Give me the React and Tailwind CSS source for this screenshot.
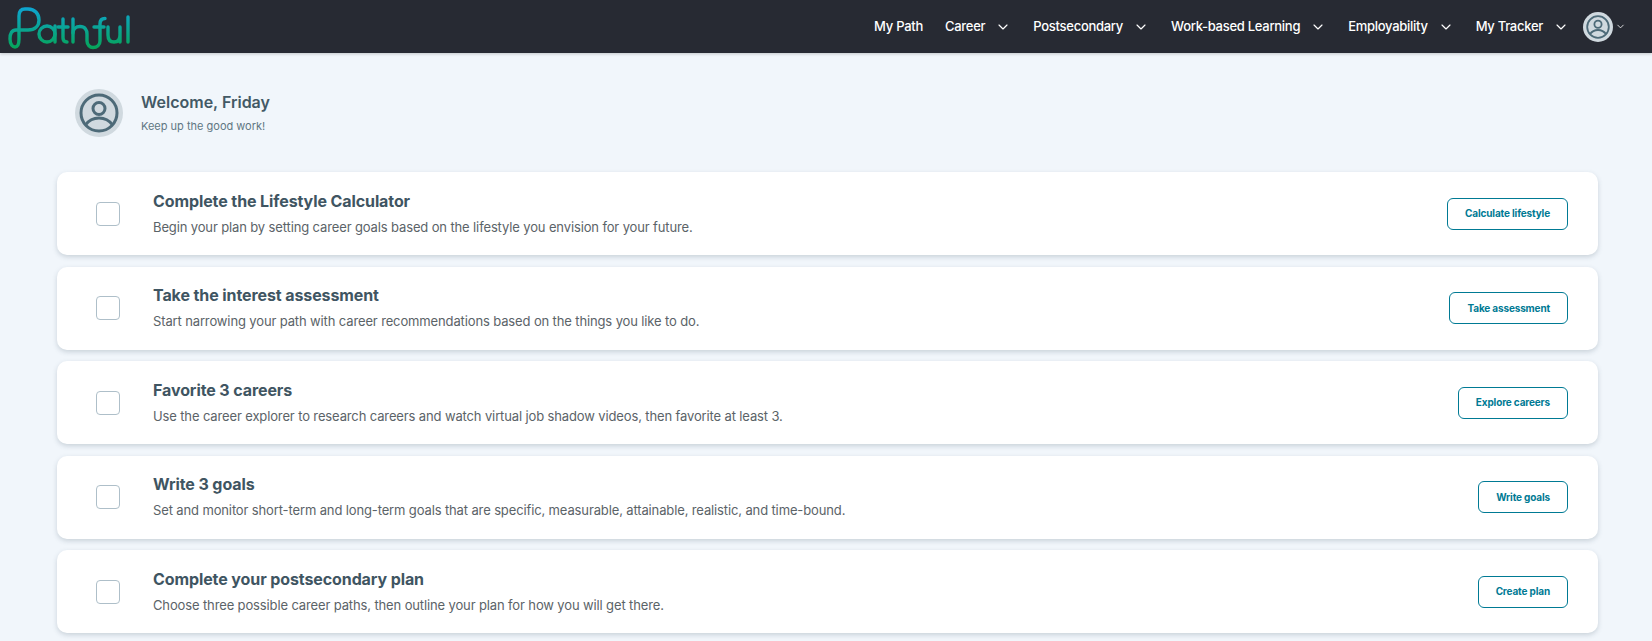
import { ChevronDown } from 'lucide-react';

const navItems = [
	{ label: 'My Path' },
	{ label: 'Career', menu: true },
	{ label: 'Postsecondary', menu: true },
	{ label: 'Work-based Learning', menu: true },
	{ label: 'Employability', menu: true },
	{ label: 'My Tracker', menu: true },
];

const tasks = [
	{
		title: 'Complete the Lifestyle Calculator',
		text: 'Begin your plan by setting career goals based on the lifestyle you envision for your future.',
		action: 'Calculate lifestyle',
	},
	{
		title: 'Take the interest assessment',
		text: 'Start narrowing your path with career recommendations based on the things you like to do.',
		action: 'Take assessment',
	},
	{
		title: 'Favorite 3 careers',
		text: 'Use the career explorer to research careers and watch virtual job shadow videos, then favorite at least 3.',
		action: 'Explore careers',
	},
	{
		title: 'Write 3 goals',
		text: 'Set and monitor short-term and long-term goals that are specific, measurable, attainable, realistic, and time-bound.',
		action: 'Write goals',
	},
	{
		title: 'Complete your postsecondary plan',
		text: 'Choose three possible career paths, then outline your plan for how you will get there.',
		action: 'Create plan',
	},
];

const Logo = () => (
	<svg width="132" height="50" viewBox="0 0 132 50" fill="none" className="shrink-0">
		<defs>
			<linearGradient id="pathful" gradientUnits="userSpaceOnUse" x1="0" y1="5" x2="0" y2="46">
				<stop offset="0" stopColor="#0ea5d3" />
				<stop offset="1" stopColor="#06a45a" />
			</linearGradient>
		</defs>
		<g stroke="url(#pathful)" strokeWidth="3.4" strokeLinecap="round" strokeLinejoin="round">
			<path d="M19 37 V14 C19 9 21 7 25 7 H28 C35 7 39 12 39 18 C39 24 35 28 28 28 H16 C12 28 10 31 10 37 C10 43 13 45 15 45 C18 45 19 42 19 37" />
			<circle cx="47" cy="32" r="8" />
			<path d="M55 24 V40" />
			<path d="M63 17 V36 C63 39 65 40 67 40" />
			<path d="M58 25 H68" />
			<path d="M73 17 V40" />
			<path d="M73 31 C73 27 76 24.500 80 24.500 C85 24.500 87 28 87 32 V39 C87 43 90 45.500 93 45.500 C97 45.500 100 43 100 39 V22 C100 18 102 16.500 105 16.500" />
			<path d="M94 25 H104" />
			<path d="M108 25 V33 C108 38 110 40 114 40 C118 40 120 38 120 33 V25 M120 33 V40" />
			<path d="M128 15 V40" />
		</g>
	</svg>
);

const Avatar = ({ box, icon }) => (
	<div className={`flex items-center justify-center rounded-full bg-[#d0d9df] ${box}`}>
		<svg viewBox="0 0 40 40" fill="none" stroke="#4d6a78" strokeWidth="3" className={icon}>
			<circle cx="20" cy="20" r="18" />
			<circle cx="20" cy="15.500" r="6" />
			<path d="M6.500 32 C10 27 14.500 25 20 25 C25.500 25 30 27 33.500 32" />
		</svg>
	</div>
);

const NavItem = ({ label, menu }) => (
	<div className="flex items-center">
		<span className="text-[13px] font-medium tracking-[-0.28px] text-white">{label}</span>
		{menu && <ChevronDown className="ml-[10px] h-[16px] w-[16px] text-white" strokeWidth={1.75} />}
	</div>
);

const TaskCard = ({ title, text, action }) => (
	<div className="flex h-[83px] items-center rounded-[10px] bg-white pr-[30px] pl-[39px] shadow-[0_2px_5px_rgba(60,80,100,0.22)]">
		<div className="h-[24px] w-[24px] shrink-0 rounded-[4px] border border-[#aebfc9] bg-white" />
		<div className="ml-[33px] flex-1 pb-[2px]">
			<h3 className="text-[16px] leading-[24px] font-bold tracking-[-0.1px] text-[#3f5562]">{title}</h3>
			<p className="mt-[4px] text-[13px] leading-[20px] tracking-[-0.13px] text-[#5b6368]">{text}</p>
		</div>
		<button className="h-[32px] rounded-[6px] border border-[#007a94] px-[17px] text-[10px] font-bold tracking-[-0.15px] whitespace-nowrap text-[#007a94]">
			{action}
		</button>
	</div>
);

export default function App() {
	return (
		<div className="h-[641px] overflow-hidden bg-[#f1f6fb] font-['Inter',sans-serif]">
			<header className="flex h-[53px] items-center justify-between bg-[#272a33] pr-[26px] shadow-[0_1px_3px_rgba(0,0,0,0.2)]">
				<Logo />
				<nav className="flex items-center gap-[22px]">
					{navItems.map((item) => (
						<NavItem key={item.label} {...item} />
					))}
					<div className="ml-[-8px] flex items-center gap-[2px]">
						<Avatar box="h-[30px] w-[30px]" icon="h-[24px] w-[24px]" />
						<ChevronDown className="h-[11px] w-[11px] text-white" strokeWidth={1.75} />
					</div>
				</nav>
			</header>

			<main className="pr-[54px] pl-[57px]">
				<section className="flex h-[119px] items-center pl-[18px]">
					<Avatar box="h-[48px] w-[48px]" icon="h-[40px] w-[40px]" />
					<div className="ml-[18px] pb-[1px]">
						<h2 className="text-[16px] leading-[24px] font-semibold text-[#435965]">Welcome, Friday</h2>
						<p className="mt-[4px] text-[11px] leading-[16px] text-[#5f7683]">Keep up the good work!</p>
					</div>
				</section>
				<div className="flex flex-col gap-[11.500px]">
					{tasks.map((task) => (
						<TaskCard key={task.title} {...task} />
					))}
				</div>
			</main>
		</div>
	);
}
